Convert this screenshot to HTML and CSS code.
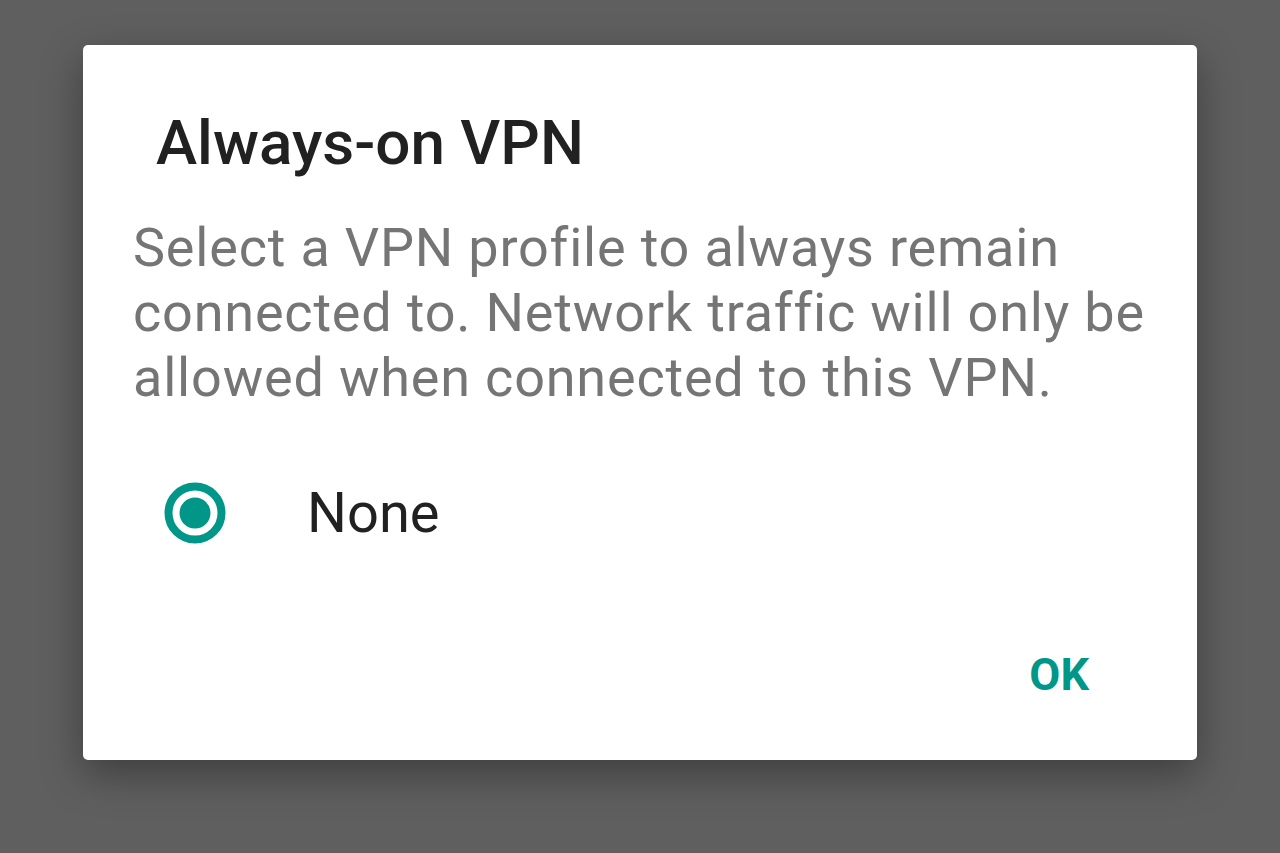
FILE: index.html
```html
<!DOCTYPE html>
<html>
<head>
<meta charset="utf-8">
<link rel="stylesheet" href="styles.css">
</head>
<body>
<div class="dialog">
  <h1 class="title">Always-on VPN</h1>
  <p class="message">Select a VPN profile to always remain connected to. Network traffic will only be allowed when connected to this VPN.</p>
  <div class="option">
    <svg class="radio" width="64" height="64" viewBox="0 0 64 64">
      <circle cx="32" cy="32" r="26.5" fill="none" stroke="#009688" stroke-width="8"/>
      <circle cx="32" cy="32" r="15.5" fill="#009688"/>
    </svg>
    <span class="option-label">None</span>
  </div>
  <div class="actions">
    <span class="ok">OK</span>
  </div>
</div>
</body>
</html>
```
FILE: styles.css
```css
html, body {
  margin: 0;
  padding: 0;
  height: 100%;
}
body {
  background: #5f5f5f;
  font-family: Roboto, "Noto Sans", sans-serif;
  overflow: hidden;
}
.dialog {
  margin: 45px 0 0 83px;
  width: 1114px;
  height: 715px;
  box-sizing: border-box;
  background: #fff;
  border-radius: 5px;
  box-shadow: 0 14px 40px rgba(0,0,0,0.35);
  display: flex;
  flex-direction: column;
  padding: 0 0 0 50px;
}
.title {
  margin: 63px 0 0 0;
  padding: 0 0 0 23px;
  font-size: 62px;
  font-weight: 500;
  color: #212121;
  line-height: 70px;
}
.message {
  margin: 37px 0 0 0;
  font-size: 54px;
  letter-spacing: 0.8px;
  line-height: 65px;
  color: #757575;
  width: 1030px;
}
.option {
  display: flex;
  align-items: center;
  height: 80px;
  margin-top: 63px;
  padding-left: 30px;
}
.radio {
  display: block;
}
.option-label {
  margin-left: 80px;
  font-size: 56px;
  line-height: 80px;
  color: #212121;
}
.actions {
  display: flex;
  justify-content: flex-end;
  padding-right: 108px;
  margin-top: 97px;
}
.ok {
  font-size: 45px;
  font-weight: 700;
  color: #009688;
  line-height: 50px;
}
```
